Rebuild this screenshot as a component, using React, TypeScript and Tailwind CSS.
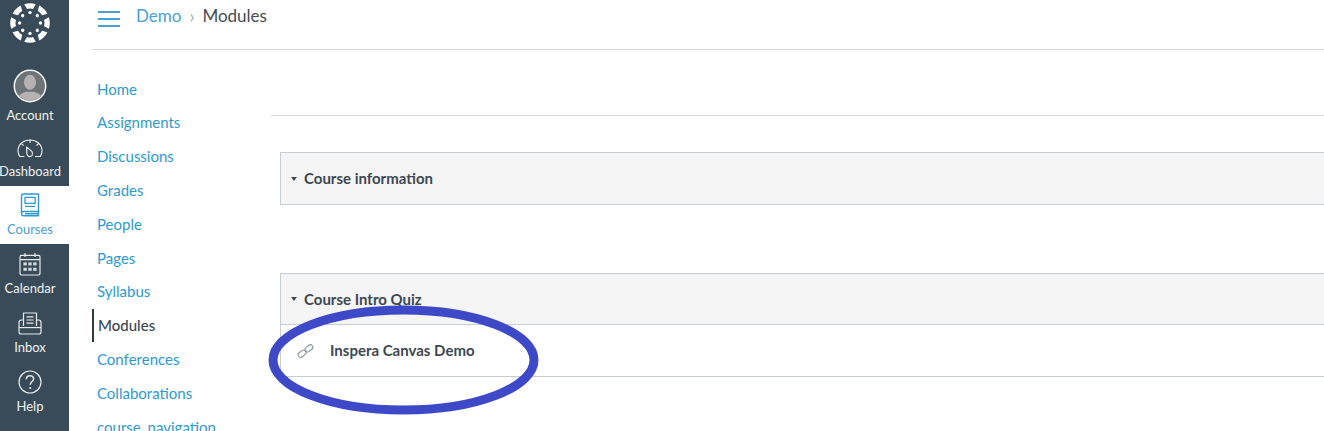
import React from "react";

const font = { fontFamily: "Lato, 'Open Sans', sans-serif" };

function Logo() {
  const petals = [0, 45, 90, 135, 180, 225, 270, 315];
  return (
    <svg width="40" height="40" viewBox="-20 -20 40 40" fill="#ffffff">
      {petals.map((a) => (
        <g key={a} transform={`rotate(${a})`}>
          <path d="M-5.8 -18.8 Q0 -20.8 5.8 -18.8 L3 -14 Q0 -15 -3 -14 Z" />
          <circle cx="0" cy="-10.4" r="1.7" />
        </g>
      ))}
    </svg>
  );
}

function Avatar() {
  return (
    <svg width="34" height="34" viewBox="0 0 36 36">
      <defs>
        <clipPath id="av"><circle cx="18" cy="18" r="15.5" /></clipPath>
      </defs>
      <circle cx="18" cy="18" r="15.8" fill="#6d7478" />
      <g clipPath="url(#av)" fill="#b5b2b1">
        <ellipse cx="18" cy="14" rx="6.4" ry="8" />
        <path d="M4 36 Q4 26 14 24 L22 24 Q32 26 32 36 Z" />
      </g>
      <circle cx="18" cy="18" r="16.6" fill="none" stroke="#ffffff" strokeWidth="1.6" />
    </svg>
  );
}

function Dash() {
  return (
    <svg width="26" height="20" viewBox="0 0 26 20" fill="none" stroke="#e6e9eb" strokeWidth="1.2" strokeLinejoin="round" strokeLinecap="round">
      <path d="M7 17.5 H2.6 Q1 14.5 1 11.8 C1 5.5 6.3 1 13 1 C19.7 1 25 5.5 25 11.8 Q25 14.5 23.4 17.5 H18.5" />
      <path d="M13 1 V3.5 M4.5 4.6 L6.2 6.2 M21.5 4.6 L19.8 6.2" />
      <path d="M9.6 8 L14.8 12.4 Q16.2 14.5 15 16.6 Q13 18.4 10.8 16.8 Q9.4 15.4 9.8 13 Z" />
    </svg>
  );
}

function Book() {
  return (
    <svg width="20" height="24" viewBox="0 0 20 24" fill="none" stroke="#2d9ad0" strokeWidth="1.4" strokeLinejoin="round">
      <path d="M1.5 20 V2.8 Q1.5 1 3.4 1 H18.5 V18.5 H3.6 Q1.5 18.5 1.5 20.6 Q1.5 22.8 3.6 22.8 H18.5 V18.5" />
      <rect x="5" y="4.4" width="10.2" height="6" strokeWidth="1.3" />
      <path d="M5 13.4 H15.2 M5 20.7 H18" />
    </svg>
  );
}

function Cal() {
  return (
    <svg width="22" height="24" viewBox="0 0 22 24" fill="none" stroke="#e6e9eb" strokeWidth="1.2">
      <rect x="1" y="3.4" width="20" height="19.6" rx="1.4" />
      <path d="M1 7.6 H21 M6 1 V5 M16 1 V5" />
      <g fill="#d5d9dc" stroke="none">
        <rect x="4.4" y="10.4" width="3.4" height="3" />
        <rect x="9.3" y="10.4" width="3.4" height="3" />
        <rect x="14.2" y="10.4" width="3.4" height="3" />
        <rect x="4.4" y="15.8" width="3.4" height="3" />
        <rect x="9.3" y="15.8" width="3.4" height="3" />
        <rect x="14.2" y="15.8" width="3.4" height="3" />
      </g>
    </svg>
  );
}

function Inbox() {
  return (
    <svg width="24" height="23" viewBox="0 0 24 23" fill="none" stroke="#e6e9eb" strokeWidth="1.2" strokeLinejoin="round">
      <path d="M5.5 14 V1 H18.5 V14" />
      <path d="M8.5 4.8 H15.5 M8.5 8 H15.5 M8.5 11.2 H15.5" />
      <path d="M5.5 8 H3.4 Q1 8 1 10.4 V20 Q1 22 3 22 H21 Q23 22 23 20 V10.4 Q23 8 20.6 8 H18.5" />
      <path d="M1 15.6 H23" />
    </svg>
  );
}

function Help() {
  return (
    <svg width="24" height="24" viewBox="0 0 24 24" fill="none" stroke="#e6e9eb" strokeWidth="1.2">
      <circle cx="12" cy="12" r="11" />
      <path d="M8.4 9.2 C8.4 6.8 10 5.8 12 5.8 C14 5.8 15.6 7 15.6 9 C15.6 11.4 12.2 11.8 12.2 14.8" strokeWidth="1.5" />
      <circle cx="12.2" cy="18" r="1.1" fill="#e6e9eb" stroke="none" />
    </svg>
  );
}

function LinkIcon() {
  return (
    <svg width="17" height="16" viewBox="0 0 17 16" fill="none" stroke="#8a949b" strokeWidth="1.1">
      <rect x="0.8" y="8.2" width="8.4" height="5" rx="2.5" transform="rotate(-38 5 10.7)" />
      <rect x="7.8" y="2.8" width="8.4" height="5" rx="2.5" transform="rotate(-38 12 5.3)" />
    </svg>
  );
}

function Caret() {
  return <span className="w-0 h-0 border-l-[3px] border-r-[3px] border-t-[4px] border-l-transparent border-r-transparent border-t-[#3d4852]" />;
}

function NavItem({ icon, label, h, active }: { icon: React.ReactNode; label: string; h: string; active?: boolean }) {
  return (
    <div className={`flex flex-col items-center justify-end pb-[7px] pr-[9px] ${h} ${active ? "bg-white text-[#4a9fd6]" : "text-[#f0f2f3]"}`}>
      <div className="flex items-center justify-center">{icon}</div>
      <span className="text-[13px] leading-[16px] mt-[4px] whitespace-nowrap">{label}</span>
    </div>
  );
}

const links = ["Home", "Assignments", "Discussions", "Grades", "People", "Pages", "Syllabus", "Modules", "Conferences", "Collaborations", "course_navigation"];

export default function App() {
  return (
    <div className="relative flex w-[1324px] h-[431px] overflow-hidden bg-white" style={font}>
      <aside className="w-[69px] h-full shrink-0 bg-[#394b58] flex flex-col">
        <div className="h-[45px] pr-[9px] flex items-center justify-center"><Logo /></div>
        <div className="h-[13px]" />
        <NavItem icon={<Avatar />} label="Account" h="h-[72px]" />
        <NavItem icon={<Dash />} label="Dashboard" h="h-[56px]" />
        <NavItem icon={<Book />} label="Courses" h="h-[58px]" active />
        <NavItem icon={<Cal />} label="Calendar" h="h-[59px]" />
        <NavItem icon={<Inbox />} label="Inbox" h="h-[59px]" />
        <NavItem icon={<Help />} label="Help" h="h-[59px]" />
      </aside>

      <div className="flex-1 min-w-0 ml-[23px] flex flex-col">
        <header className="h-[50px] shrink-0 border-b border-[#d5d9dc] flex items-start pt-[5px] pl-[6px]">
          <div className="w-[22px] h-[16px] mt-[6px] flex flex-col justify-between">
            <span className="block h-[2px] bg-[#4a9fd6]" />
            <span className="block h-[2px] bg-[#4a9fd6]" />
            <span className="block h-[2px] bg-[#4a9fd6]" />
          </div>
          <div className="ml-[16px] flex items-center text-[17px] leading-[22px]">
            <span className="text-[#4a9fd6]">Demo</span>
            <span className="w-[21px] text-center text-[#a7aeb3] text-[19px]">›</span>
            <span className="text-[#444c52]">Modules</span>
          </div>
        </header>

        <div className="flex flex-1 min-h-0">
          <nav className="w-[179px] shrink-0 pt-[22px] flex flex-col overflow-hidden">
            {links.map((l) => (
              <div
                key={l}
                className={`h-[33.8px] shrink-0 flex items-center text-[15px] whitespace-nowrap ${l === "Modules" ? "border-l-2 border-[#2d3b45] pl-[4px] text-[#3d4852] font-medium" : "pl-[5px] text-[#2d9ad0]"}`}
              >
                {l}
              </div>
            ))}
          </nav>

          <main className="flex-1 min-w-0">
            <div className="mt-[65px] border-t border-[#d5d9dc]" />
            <section className="ml-[9px] mt-[36px] h-[53px] bg-[#f5f5f5] border border-[#c7cdd1] border-r-0 flex items-center pl-[10px] gap-[7px]">
              <Caret />
              <span className="text-[15px] font-bold text-[#3d4852]">Course information</span>
            </section>
            <section className="ml-[9px] mt-[68px] border-l border-[#c7cdd1]">
              <div className="h-[52px] bg-[#f5f5f5] border border-l-0 border-r-0 border-[#c7cdd1] flex items-center pl-[10px] gap-[7px]">
                <Caret />
                <span className="text-[15px] font-bold text-[#3d4852]">Course Intro Quiz</span>
              </div>
              <div className="h-[52px] border-b border-[#c7cdd1] flex items-center pl-[16px]">
                <LinkIcon />
                <span className="ml-[16px] text-[15px] font-bold text-[#3d4852] whitespace-nowrap">Inspera Canvas Demo</span>
              </div>
            </section>
          </main>
        </div>
      </div>

      <svg className="absolute left-[264px] top-[302px] pointer-events-none" width="280" height="116" viewBox="0 0 280 116">
        <ellipse cx="139.5" cy="58" rx="130.5" ry="50" fill="none" stroke="#3e49c8" strokeWidth="9" />
      </svg>
    </div>
  );
}
